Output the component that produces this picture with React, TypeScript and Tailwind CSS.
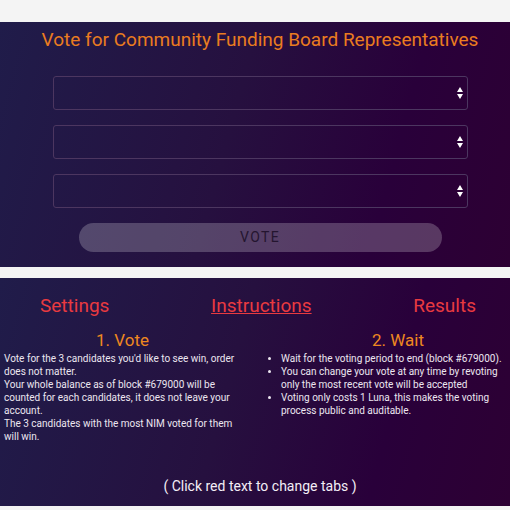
import { useState } from "react";

const panel =
  "bg-[linear-gradient(105deg,#201c4a_0%,#26103f_45%,#29003a_75%,#2d0033_100%)]";

function CandidateSelect({ label }: { label: string }) {
  return (
    <div className="relative">
      <select
        aria-label={label}
        className="block h-[34px] w-full appearance-none rounded-[3px] border border-[#4c3660] bg-transparent px-3 text-sm text-white"
      />
      <svg
        aria-hidden="true"
        viewBox="0 0 6 12"
        className="pointer-events-none absolute top-[11px] right-[5px] h-[12px] w-[6px] fill-white"
      >
        <path d="M3 0 6 5H0zM3 12 0 7h6z" />
      </svg>
    </div>
  );
}

function Tab({
  name,
  active,
  onSelect,
}: {
  name: string;
  active: boolean;
  onSelect: () => void;
}) {
  return (
    <button
      type="button"
      role="tab"
      aria-selected={active}
      onClick={onSelect}
      className={
        active
          ? "text-[#e93a40] underline decoration-1 underline-offset-1"
          : "text-[#e93a40]"
      }
    >
      {name}
    </button>
  );
}

export default function App() {
  const [tab, setTab] = useState("Instructions");

  return (
    <main className="flex min-h-screen flex-col gap-[11px] bg-[#f4f4f4] pt-[22px] pb-1 font-[Roboto,'Liberation_Sans',sans-serif]">
      <section className={`${panel} pt-[6px] pb-[15px] pl-[10px]`}>
        <h1 className="text-center text-[19px] leading-[24px] text-[#ea7c20]">
          Vote for Community Funding Board Representatives
        </h1>
        <form
          className="mx-auto mt-[24px] flex w-[83%] flex-col gap-[15px]"
          onSubmit={(event) => event.preventDefault()}
        >
          <CandidateSelect label="First candidate" />
          <CandidateSelect label="Second candidate" />
          <CandidateSelect label="Third candidate" />
          <button
            type="submit"
            className="mx-[26px] h-[29px] rounded-full bg-white/22 text-[14px] tracking-widest text-[#24152f]"
          >
            VOTE
          </button>
        </form>
      </section>

      <section className={`${panel} pt-[16px] pb-[10px]`}>
        <div
          role="tablist"
          className="flex justify-between pr-[34px] pl-[40px] text-[19px] leading-[24px]"
        >
          {["Settings", "Instructions", "Results"].map((name) => (
            <Tab
              key={name}
              name={name}
              active={tab === name}
              onSelect={() => setTab(name)}
            />
          ))}
        </div>
        <div className="mt-[12px] grid grid-cols-[245px_1fr] gap-x-[15px] text-[10px] leading-[13px] text-[#ece6f0]">
          <article className="pl-[4px]">
            <h2 className="pr-[4px] text-center text-[17px] leading-[20px] text-[#ee8820]">
              1. Vote
            </h2>
            <p className="mt-[2px]">
              Vote for the 3 candidates you'd like to see win, order does not
              matter.
            </p>
            <p>
              Your whole balance as of block #679000 will be counted for each
              candidates, it does not leave your account.
            </p>
            <p>The 3 candidates with the most NIM voted for them will win.</p>
          </article>
          <article>
            <h2 className="pr-[10px] pl-[36px] text-center text-[17px] leading-[20px] text-[#ee8820]">
              2. Wait
            </h2>
            <ul className="mt-[2px] list-disc pl-[21px]">
              <li>Wait for the voting period to end (block #679000).</li>
              <li>
                You can change your vote at any time by revoting only the most
                recent vote will be accepted
              </li>
              <li>
                Voting only costs 1 Luna, this makes the voting process public
                and auditable.
              </li>
            </ul>
          </article>
        </div>
        <p className="mt-[33px] pl-[10px] text-center text-[14px] leading-[20px] text-[#f3eef6]">
          ( Click red text to change tabs )
        </p>
      </section>
    </main>
  );
}
